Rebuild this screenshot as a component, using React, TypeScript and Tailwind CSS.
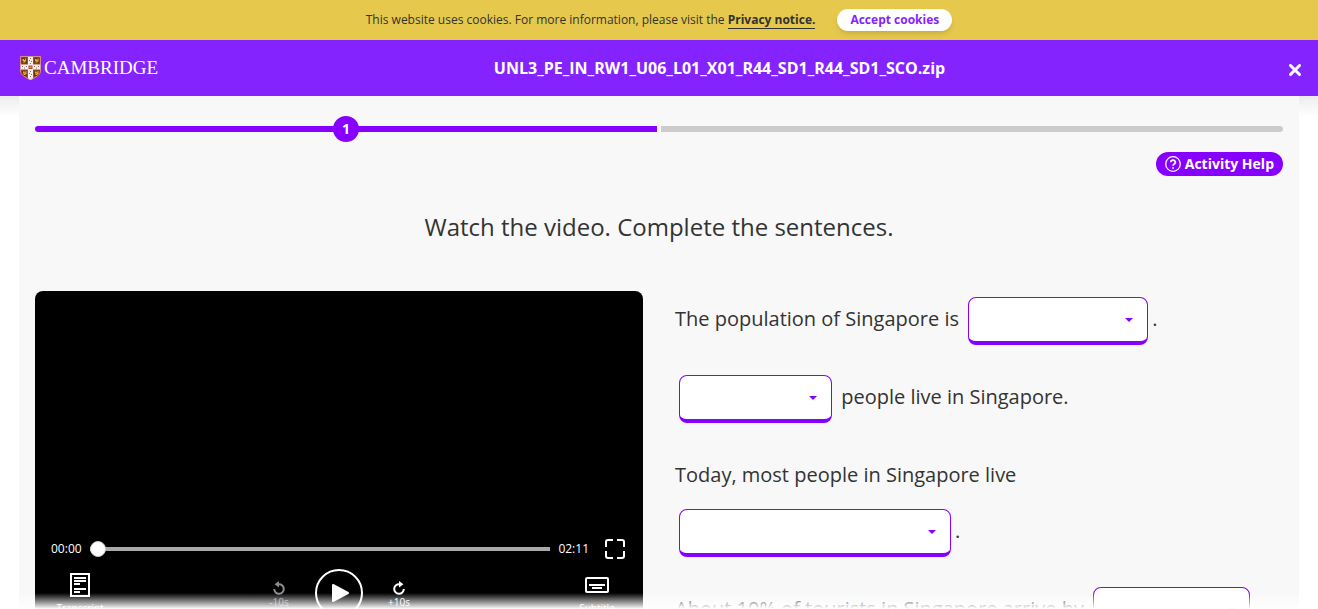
import type { ReactNode } from "react";

function Crest() {
  return (
    <svg viewBox="0 0 21 24" className="h-6 w-[21px] shrink-0" aria-hidden="true">
      <defs>
        <clipPath id="shield">
          <path d="M.5.5h20V15c0 4-5 6.800-10 9-5-2.200-10-5-10-9Z" />
        </clipPath>
      </defs>
      <g clipPath="url(#shield)">
        <path fill="#b8432f" d="M0 0h21v24H0z" />
        <path fill="#f6efe9" d="M8 0h5v24H8zM0 8.500h21v5H0z" />
        <g fill="#6b3216">
          <path d="M1.500 1.500h5.500v6H1.500zM14 1.500h5.500v6H14zM1.500 14.500h5.500v6H1.500zM14 14.500h5.500v6H14z" />
        </g>
        <g fill="#e5b62c">
          <path d="M2.500 3h1.500v1h1V2.500h1v3H5v1H3v-1h1V5H2.500zM15 3h1.500v1h1V2.500h1v3h-1v1h-2v-1h1V5H15zM3 15.500h1.500v1h1V15h1v3h-1v1h-2v-1h1v-.5H3zM15 15.500h1.500v1h1V15h1v3h-1v1h-2v-1h1v-.5H15z" />
        </g>
        <path fill="#b8432f" d="M8.500 9.500h4v3.500h-4z" />
        <path fill="#d9a64a" d="M9.500 10.500h2V12h-2z" />
        <g fill="#77716f">
          <path d="M10 2h1v1h-1zM9 4h1v1H9zM11 5h1v1h-1zM10 7h1v1h-1zM2 10h1v1H2zM4 11.500h1v1H4zM6 10h1v1H6zM14 10h1v1h-1zM16 11.500h1v1h-1zM18 10h1v1h-1zM10 15h1v1h-1zM9 17h1v1H9zM11 18h1v1h-1zM10 20h1v1h-1z" />
        </g>
      </g>
      <path fill="none" stroke="#e9a08c" strokeWidth=".8" d="M.5.5h20V15c0 4-5 6.500-10 8.500-5-2-10-4.500-10-8.500Z" />
    </svg>
  );
}

function Replay({ forward = false }: { forward?: boolean }) {
  return (
    <svg viewBox="0 0 14 14" className="size-[14px]" aria-hidden="true">
      <g transform={forward ? "translate(14 0) scale(-1 1)" : undefined}>
        <path fill="none" stroke="currentColor" strokeWidth="2" d="M6.500 3.200A4.800 4.800 0 1 1 2.200 8" />
        <path fill="currentColor" d="M7 0v6.400L2.500 3.200Z" />
      </g>
    </svg>
  );
}

function Gap({ label, width, options }: { label: string; width: string; options: string[] }) {
  return (
    <span className={`relative mx-1 inline-flex h-12 ${width}`}>
      <select
        aria-label={label}
        defaultValue=""
        className="h-full w-full appearance-none rounded-lg border border-b-4 border-[#8700ff] bg-white px-4 text-xl"
      >
        <option value=""></option>
        {options.map((o) => (
          <option key={o}>{o}</option>
        ))}
      </select>
      <svg viewBox="0 0 8 4" className="pointer-events-none absolute right-[15px] top-[21px] h-1 w-2" aria-hidden="true">
        <path fill="#8700ff" d="M0 0h8L4 4Z" />
      </svg>
    </span>
  );
}

function Sentence({ children }: { children: ReactNode }) {
  return <p className="flex flex-wrap items-center gap-y-2">{children}</p>;
}

function Words({ children }: { children: ReactNode }) {
  return <span className="flex h-12 items-center whitespace-pre pb-1">{children}</span>;
}

function Player() {
  return (
    <section aria-label="Video player" className="h-[342px] rounded-lg bg-black px-4 pt-[244px] text-white">
      <div className="flex h-7 items-center text-xs font-medium">
        <span>00:00</span>
        <div className="relative mx-2 flex h-4 flex-1 items-center">
          <div className="h-1 w-full bg-[#a9a9a9]" />
          <input
            type="range"
            aria-label="Seek"
            min={0}
            max={131}
            defaultValue={0}
            className="absolute inset-0 h-4 w-full appearance-none bg-transparent [&::-webkit-slider-thumb]:size-4 [&::-webkit-slider-thumb]:appearance-none [&::-webkit-slider-thumb]:rounded-full [&::-webkit-slider-thumb]:border [&::-webkit-slider-thumb]:border-[#cccccc] [&::-webkit-slider-thumb]:bg-white"
          />
        </div>
        <span>02:11</span>
        <button aria-label="Full screen" className="ml-4 mr-[2px]">
          <svg viewBox="0 0 20 20" className="size-5" fill="none" stroke="currentColor" strokeWidth="2" aria-hidden="true">
            <path d="M1 8V3a2 2 0 0 1 2-2h5M12 1h5a2 2 0 0 1 2 2v5M19 12v5a2 2 0 0 1-2 2h-5M8 19H3a2 2 0 0 1-2-2v-5" />
          </svg>
        </button>
      </div>
      <div className="grid grid-cols-[1fr_auto_1fr] items-start pt-1 text-[10px] font-medium leading-[14px]">
        <button className="ml-1 mt-[6px] flex w-[50px] flex-col items-center gap-1">
          <svg viewBox="0 0 20 24" className="h-6 w-5" aria-hidden="true">
            <path fill="none" stroke="#fff" strokeWidth="2" d="M1 1h18v22H1z" />
            <path fill="#fff" d="M4 4h12v2H4zM4 7h12v2H4zM4 10h6v2H4zM4 15h12v2H4zM4 18h6v2H4z" />
          </svg>
          Transcript
        </button>
        <div className="flex items-start gap-6">
          <button disabled className="mt-[14px] flex w-6 flex-col items-center whitespace-nowrap text-[#8c8c8c]">
            <Replay />
            -10s
          </button>
          <button aria-label="Play" className="mt-[2px]">
            <svg viewBox="0 0 48 48" className="size-12" aria-hidden="true">
              <circle cx="24" cy="24" r="23" fill="none" stroke="#fff" strokeWidth="2" />
              <path fill="#fff" stroke="#fff" strokeWidth="2" strokeLinejoin="round" d="M18 16v16l15-8Z" />
            </svg>
          </button>
          <button className="mt-[14px] flex w-6 flex-col items-center whitespace-nowrap">
            <Replay forward />
            +10s
          </button>
        </div>
        <button className="mr-1 mt-[10px] flex w-[52px] flex-col items-center gap-2 justify-self-end">
          <svg viewBox="0 0 24 16" className="h-4 w-6" aria-hidden="true">
            <rect x="1" y="1" width="22" height="14" rx="1" fill="none" stroke="#fff" strokeWidth="2" />
            <path fill="#fff" d="M4 7h16v2H4zM7 10h10v2H7z" />
          </svg>
          Subtitle
        </button>
      </div>
    </section>
  );
}

export default function App() {
  return (
    <div className="relative flex h-screen flex-col overflow-hidden bg-white font-['Open_Sans',sans-serif] text-[#333333]">
      <aside className="flex h-10 shrink-0 items-center justify-center bg-[#e5c84c] text-xs">
        <p>
          This website uses cookies. For more information, please visit the{" "}
          <a href="#privacy" className="border-b border-[#333333] font-bold">
            Privacy notice.
          </a>
        </p>
        <button className="ml-[22px] h-[22px] rounded-full bg-white px-[13px] font-bold text-[#8523ff] shadow-md">Accept cookies</button>
      </aside>

      <header className="flex h-14 shrink-0 items-center bg-[#8523ff] pl-5 pr-[14px] text-white">
        <a href="#home" aria-label="Cambridge" className="flex w-[141px] items-center gap-[3px] font-['Liberation_Serif',serif] text-[19px] leading-6">
          <Crest />
          CAMBRIDGE
        </a>
        <h1 className="flex-1 pr-2 text-center text-base font-bold">UNL3_PE_IN_RW1_U06_L01_X01_R44_SD1_R44_SD1_SCO.zip</h1>
        <button aria-label="Close" className="flex w-[18px] justify-center pt-1">
          <svg viewBox="0 0 12 12" className="size-3" aria-hidden="true">
            <path d="M1.500 1.500l9 9M10.500 1.500l-9 9" stroke="#fff" strokeWidth="3" strokeLinecap="round" />
          </svg>
        </button>
      </header>

      <div className="min-h-0 flex-1 bg-[linear-gradient(to_bottom,#ececec,#ffffff_20px)]">
        <main className="mx-auto h-full w-full max-w-[1280px] overflow-hidden bg-[#f8f8f8] px-4">
          <nav aria-label="Progress" className="flex h-[66px] items-center gap-1">
            <div className="flex h-[6px] flex-1 items-center justify-center rounded-l-full bg-[#8700ff]">
              <a
                href="#screen-1"
                className="flex size-[26px] shrink-0 items-center justify-center rounded-full bg-[#8700ff] text-sm font-bold text-white"
              >
                1
              </a>
            </div>
            <div className="h-[6px] flex-1 rounded-r-full bg-[#cccccc]" />
          </nav>
          <div className="-mt-[10px] flex justify-end">
            <button className="flex h-6 items-center gap-1 rounded-full bg-[#8700ff] pl-[9px] pr-[9px] text-sm font-bold text-white">
              <svg viewBox="0 0 16 16" className="size-4" fill="none" stroke="#fff" aria-hidden="true">
                <circle cx="8" cy="8" r="7.300" strokeWidth="1.300" />
                <path strokeWidth="1.700" d="M5.700 6.300a2.300 2.100 0 1 1 3.500 1.700C8.400 8.500 8 8.800 8 9.800" />
                <circle cx="8" cy="12" r=".7" fill="#fff" strokeWidth=".5" />
              </svg>
              Activity Help
            </button>
          </div>
          <h2 className="mt-[31px] text-center text-2xl leading-10">Watch the video. Complete the sentences.</h2>
          <div className="mt-11 grid grid-cols-2 gap-8">
            <Player />
            <form className="flex flex-col gap-[30px] pt-[6px] text-xl font-[370]">
              <Sentence>
                <Words>The population of Singapore is </Words>
                <Gap label="Population of Singapore" width="w-[180px]" options={["5.7 million", "7.5 million"]} />
                <Words>.</Words>
              </Sentence>
              <Sentence>
                <Gap label="Who lives in Singapore" width="w-[153px]" options={["Young", "Many"]} />
                <Words> people live in Singapore.</Words>
              </Sentence>
              <Sentence>
                <Words>Today, most people in Singapore live </Words>
                <Gap label="Where people live" width="w-[272px]" options={["in tall apartment buildings", "in houses"]} />
                <Words>.</Words>
              </Sentence>
              <Sentence>
                <Words>About 10% of tourists in Singapore arrive by </Words>
                <Gap label="How tourists arrive" width="w-[157px]" options={["ship", "plane"]} />
              </Sentence>
            </form>
          </div>
        </main>
      </div>
      <div className="pointer-events-none absolute inset-x-0 bottom-0 h-4 bg-gradient-to-b from-white/0 to-white" />
    </div>
  );
}
